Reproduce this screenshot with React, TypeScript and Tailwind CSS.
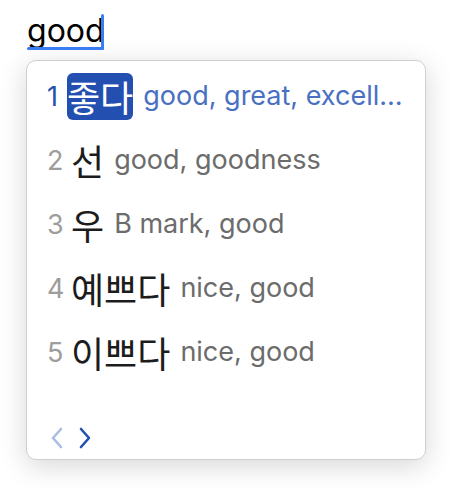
import React from 'react';

type Candidate = {
  word: string;
  gloss: string;
};

const candidates: Candidate[] = [
  { word: '좋다', gloss: 'good, great, excellent, fine' },
  { word: '선', gloss: 'good, goodness' },
  { word: '우', gloss: 'B mark, good' },
  { word: '예쁘다', gloss: 'nice, good' },
  { word: '이쁘다', gloss: 'nice, good' },
];

const latin = { fontFamily: 'Inter, "Noto Sans", sans-serif' };
const hangul = { fontFamily: '"Noto Sans CJK KR", "Noto Sans", sans-serif' };

const Chevron: React.FC<{ dir: 'left' | 'right'; color: string }> = ({ dir, color }) => (
  <svg width="14" height="22" viewBox="0 0 14 22" fill="none">
    <polyline
      points={dir === 'left' ? '11,2 3,11 11,20' : '3,2 11,11 3,20'}
      stroke={color}
      strokeWidth="2.6"
      strokeLinecap="round"
      strokeLinejoin="round"
    />
  </svg>
);

export default function App() {
  return (
    <div className="min-h-screen w-full bg-white pl-[26px] pt-[10px]">
      {/* marked text with caret */}
      <div className="relative ml-[1px] block h-[40px] w-[75px]">
        <span className="absolute left-0 top-[3px] text-[32px] leading-[36px] text-black" style={latin}>
          good
        </span>
        <div className="absolute left-0 right-[-2px] top-[37px] h-[3px] rounded-full bg-[#3a7cf4]" />
        <div className="absolute right-[-2px] top-[4px] h-[36px] w-[3px] rounded-full bg-[#3a7cf4]" />
      </div>

      {/* candidate window */}
      <div className="mt-[10px] flex h-[400px] w-[400px] flex-col rounded-[10px] border border-[#cfcfcf] bg-white pt-[3px] shadow-[0_6px_28px_rgba(0,0,0,0.16)]">
        {candidates.map((c, i) => {
          const selected = i === 0;
          return (
            <div key={c.word} className="flex h-[64px] items-center pl-[20px] pr-[20px]">
              <span
                className={`w-[20px] shrink-0 text-[27px] leading-none ${selected ? 'text-[#2451b0]' : 'text-[#9d9d9d]'}`}
                style={latin}
              >
                {i + 1}
              </span>
              <span
                className={`shrink-0 rounded-[6px] px-0 py-[1px] text-[36px] leading-[45px] ${selected ? 'bg-[#2350b0] text-white' : 'pl-[4px] text-[#1c1c1c]'}`}
                style={hangul}
              >
                {c.word}
              </span>
              <span
                className={`ml-[10px] min-w-0 truncate text-[27px] leading-[36px] ${selected ? 'text-[#4a70c2]' : 'text-[#6c6c6c]'}`}
                style={latin}
              >
                {c.gloss}
              </span>
            </div>
          );
        })}
        <div className="mt-auto flex items-center gap-[14px] pb-[10px] pl-[23px]">
          <Chevron dir="left" color="#a8bce5" />
          <Chevron dir="right" color="#2350b0" />
        </div>
      </div>
    </div>
  );
}
